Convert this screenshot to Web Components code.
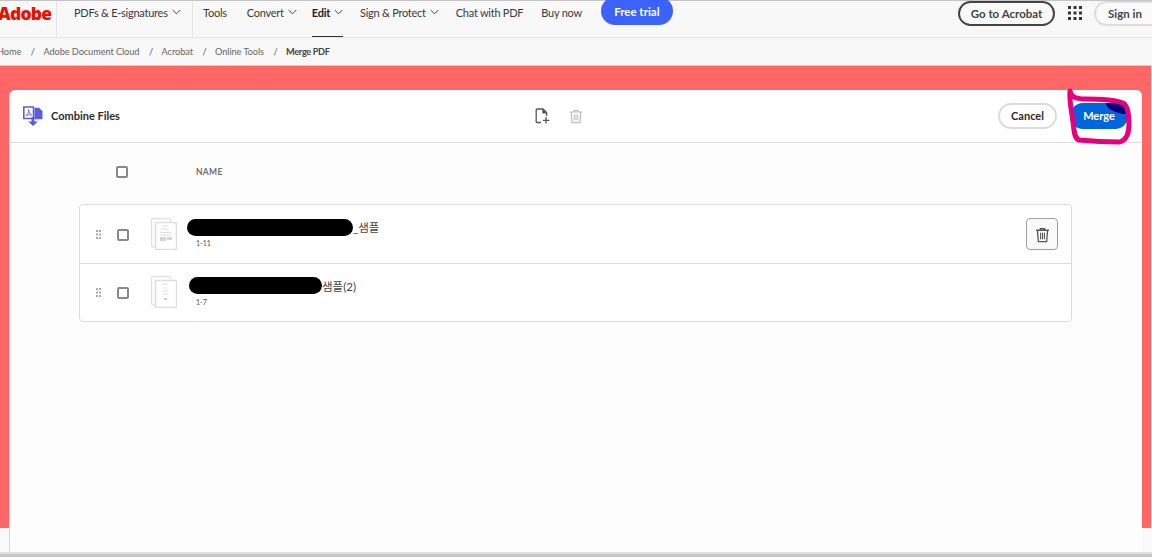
<!DOCTYPE html>
<html lang="en">
<head>
<meta charset="utf-8">
<title>Merge PDF</title>
<style>
  html, body { margin: 0; height: 100%; overflow: hidden; background: #fafafa; }
  body { font-family: Lato, "Noto Sans CJK KR", sans-serif; color: #2c2c2c; }
</style>
</head>
<body>
<app-shell>
  <top-nav></top-nav>
  <bread-crumbs></bread-crumbs>
  <combine-card>
    <file-row slot="files" pages="1-11" pill="166" offset="0" suffix="_샘플" kind="a"></file-row>
    <file-row slot="files" pages="1-7" pill="133" offset="2" suffix="샘플(2)" kind="b" last></file-row>
  </combine-card>
</app-shell>

<script>
const chevron = `<svg class="chev" width="9" height="6" viewBox="0 0 9 6"><path d="M.7 1l3.8 3.8L8.3 1" fill="none" stroke="#444" stroke-width="1"/></svg>`;

const trashPath = `
  <path d="M2 4h12M6 4V2.4h4V4" fill="none" stroke="currentColor" stroke-width="1.2"/>
  <path d="M3.2 4l.9 10.6h7.8L12.8 4" fill="none" stroke="currentColor" stroke-width="1.2"/>
  <path d="M6.2 6.4v6M8 6.4v6M9.8 6.4v6" fill="none" stroke="currentColor" stroke-width="1"/>`;

class AppShell extends HTMLElement {
  constructor() {
    super();
    this.attachShadow({ mode: "open" });
  }
  connectedCallback() {
    this.shadowRoot.innerHTML = `
    <style>
      :host { display: flex; flex-direction: column; height: 557px; overflow: hidden; }
      .edge { height: 2px; background: #dfdfdf; flex: none; }
      .floor { height: 3px; background: #c8c8c8; flex: none; }
    </style>
    <slot></slot>
    <div class="edge"></div>
    <div class="floor"></div>`;
  }
}

class TopNav extends HTMLElement {
  constructor() {
    super();
    this.attachShadow({ mode: "open" });
  }
  connectedCallback() {
    const dots = [];
    for (let y = 0; y < 3; y++) {
      for (let x = 0; x < 3; x++) {
        dots.push(`<rect x="${x * 5.5}" y="${y * 5.5}" width="3" height="3" fill="#333"/>`);
      }
    }
    this.shadowRoot.innerHTML = `
    <style>
      :host {
        display: flex; align-items: flex-start; flex: none; height: 36px;
        border-top: 1px solid #c4c4c4; border-bottom: 1px solid #e6e6e6;
        background: #f8f8f8; font-size: 11px; letter-spacing: -.25px; color: #3a3a3a; white-space: nowrap;
      }
      .logo { width: 59px; height: 36px; box-sizing: border-box; margin-left: -2px; border-right: 1px solid #e6e6e6;
        color: #eb1000; font: 800 17.5px/24px "Open Sans", sans-serif; letter-spacing: -.75px; }
      .group { display: flex; align-items: center; height: 22px; }
      .pdfs { width: 136px; height: 36px; box-sizing: border-box; padding: 0 0 14px 17px; border-right: 1px solid #e6e6e6; }
      .links { padding-left: 10px; gap: 0; }
      a { display: flex; align-items: center; height: 22px; color: inherit; text-decoration: none; }
      .chev { margin-left: 4px; flex: none; }
      .edit { position: relative; font-weight: 700; color: #222; }
      .edit::after { content: ""; position: absolute; left: 0; right: 0; top: 35px; height: 1px; background: #333; }
      .cta { flex: none; height: 28px; margin-top: -4px; margin-left: 19px; width: 72px; border-radius: 14px; letter-spacing: 0;
        background: #3b63fb; color: #fff; font-weight: 700; font-size: 11.5px; display: flex; align-items: center; justify-content: center; padding-top: 1px; box-sizing: border-box; }
      .right { margin-left: auto; display: flex; align-items: flex-start; }
      .pill { box-sizing: border-box; height: 25px; padding-bottom: 1px; border-radius: 13px; display: flex; align-items: center; justify-content: center; font-size: 11.5px; letter-spacing: 0; font-weight: 700; color: #444; background: #fafafa; }
      .acro { width: 97px; border: 2px solid #444; }
      .grid { margin: 5px 12px 0 13px; display: block; }
      .sign { width: 70px; margin-right: -12px; border: 2px solid #ddd; justify-content: flex-start; padding-left: 12px; }
    </style>
    <div class="logo">Adobe</div>
    <div class="group pdfs"><a>PDFs &amp; E-signatures${chevron}</a></div>
    <div class="group links">
      <a style="margin-right:20px">Tools</a>
      <a style="margin-right:15px">Convert${chevron}</a>
      <a class="edit" style="margin-right:17px">Edit${chevron}</a>
      <a style="margin-right:17px">Sign &amp; Protect${chevron}</a>
      <a style="margin-right:18px">Chat with PDF</a>
      <a>Buy now</a>
    </div>
    <div class="cta">Free trial</div>
    <div class="right">
      <div class="pill acro">Go to Acrobat</div>
      <svg class="grid" width="14" height="14" viewBox="0 0 14 14">${dots.join("")}</svg>
      <div class="pill sign">Sign in</div>
    </div>`;
  }
}

class BreadCrumbs extends HTMLElement {
  constructor() {
    super();
    this.attachShadow({ mode: "open" });
  }
  connectedCallback() {
    this.shadowRoot.innerHTML = `
    <style>
      :host {
        display: flex; align-items: center; flex: none; height: 27px; box-sizing: content-box;
        border-bottom: 1px solid #cfcfcf; background: #f8f8f8;
        font-size: 9.2px; letter-spacing: -.07px; color: #666; margin-left: -3px; white-space: nowrap; gap: 9.6px;
      }
      b { font-weight: 700; color: #444; letter-spacing: -.35px; }
      i { font-style: normal; color: #555; width: 3px; }
    </style>
    <span>Home</span><i>/</i><span>Adobe Document Cloud</span><i>/</i><span>Acrobat</span><i>/</i><span>Online Tools</span><i>/</i><b>Merge PDF</b>`;
  }
}

class CombineCard extends HTMLElement {
  constructor() {
    super();
    this.attachShadow({ mode: "open" });
  }
  connectedCallback() {
    this.shadowRoot.innerHTML = `
    <style>
      :host {
        display: block; flex: 1; min-height: 0; padding: 24px 9px 0 10px; margin-right: 1px;
        background: linear-gradient(#ff6666 462px, #fafafa 462px);
      }
      .card { position: relative; height: 100%; box-sizing: border-box; background: #fdfdfd; border-radius: 6px 6px 0 0; box-shadow: -1px 0 0 #d8d8d8; }
      header { display: flex; align-items: center; height: 52px; border-bottom: 1px solid #dcdcdc; box-sizing: content-box; background: #fff; border-radius: 6px 6px 0 0; }
      .brand { display: flex; align-items: center; gap: 8px; margin-left: 13px; width: 512px; font-size: 11px; font-weight: 700; color: #2c2c2c; }
      .brand span { margin-bottom: 1px; }
      .tools { display: flex; align-items: center; gap: 18px; }
      .actions { margin-left: auto; display: flex; align-items: center; gap: 13px; margin-right: 14px; }
      .btn { box-sizing: border-box; height: 26px; padding-bottom: 1px; border-radius: 13px; display: flex; align-items: center; justify-content: center; font-size: 11px; font-weight: 700; }
      .cancel { width: 59px; border: 2px solid #dcdcdc; color: #2c2c2c; background: #fff; }
      .merge { width: 58px; color: #fff; background: #0265dc; position: relative; overflow: hidden; }
      .merge span { position: relative; }
      .merge::before { content: ""; position: absolute; right: 0; top: 0; width: 22px; height: 11px; background: #00007f; border-radius: 0 11px 0 100%; }
      .scribble { position: absolute; right: 7px; top: -2px; pointer-events: none; }
      .head { display: flex; align-items: center; height: 57px; padding-bottom: 4px; }
      .head .box { margin-left: 106px; }
      .head span { margin-left: 68px; font-size: 8.5px; font-weight: 700; letter-spacing: .3px; color: #6e6e6e; margin-top: 1px; }
      .box { width: 12px; height: 12px; box-sizing: border-box; border: 2px solid #888; border-radius: 2px; background: #fff; }
      .list { margin: 0 69px 0 69px; width: 993px; box-sizing: border-box; border: 1px solid #dcdcdc; border-radius: 4px; background: #fff; }
    </style>
    <div class="card">
      <header>
        <div class="brand">
          <svg width="20" height="20" viewBox="0 0 20 20">
            <path d="M.8 1h9.700v11.500H.8z" fill="#fff" stroke="#5c5ce0" stroke-width="1.600"/>
            <path d="M3 9.500c2-1 3-3.500 2.600-6 .2 2.500 1.500 4.500 3 5.500-2-.4-4 0-5.600.5z" fill="none" stroke="#5c5ce0" stroke-width=".9"/>
            <path d="M11.500 1.800h4.500l3.500 3.400v8h-8z" fill="#5c5ce0"/>
            <path d="M8.500 11h3v4.500h3.300L10 20l-4.800-4.500h3.300z" fill="#5c5ce0"/>
          </svg>
          <span>Combine Files</span>
        </div>
        <div class="tools">
          <svg width="15" height="16" viewBox="0 0 15 16">
            <path d="M6 14.500H2.200a1 1 0 0 1-1-1V2a1 1 0 0 1 1-1h5.800l3.600 3.600V8" fill="none" stroke="#555" stroke-width="1.300"/>
            <path d="M7.800 1v4h3.800" fill="#555" stroke="#555"/>
            <path d="M11 9v6.500M7.800 12.300h6.600" fill="none" stroke="#555" stroke-width="1.300"/>
          </svg>
          <svg width="16" height="16" viewBox="0 0 16 16" style="color:#bcbcbc">${trashPath}</svg>
        </div>
        <div class="actions">
          <div class="btn cancel">Cancel</div>
          <div class="btn merge"><span>Merge</span></div>
        </div>
      </header>
      <svg class="scribble" width="70" height="58" viewBox="0 0 70 58">
        <path d="M5 3C6 8 9 11 20 11C34 11 50 12 58 15C63 18 64 28 64 36C64 46 61 52 55 54C42 54 24 53 14 52C9 50 9 42 8 34C7 24 4 14 5 3Z" fill="none" stroke="#e6007e" stroke-width="5" stroke-linejoin="round"/>
      </svg>
      <div class="head"><div class="box"></div><span>NAME</span></div>
      <div class="list"><slot name="files"></slot></div>
    </div>`;
  }
}

class FileRow extends HTMLElement {
  constructor() {
    super();
    this.attachShadow({ mode: "open" });
  }
  connectedCallback() {
    const pill = this.getAttribute("pill");
    const offset = this.getAttribute("offset");
    const first = this.getAttribute("kind") === "a";
    const lines = first
      ? `<path d="M12 9h6M11 12h8M10 15.500h11M10 18h11" stroke="#ddd" fill="none"/><path d="M10 20h6v4h-6zM17 20h5v3h-5z" fill="#d4d4d4"/>`
      : `<path d="M12 9h6M14 13h3M13 16h5M13 19h5" stroke="#ddd" fill="none"/><path d="M14 23h3v2h-3z" fill="#ccc"/>`;
    this.shadowRoot.innerHTML = `
    <style>
      :host { display: flex; align-items: center; height: 58px; box-sizing: content-box; border-bottom: 1px solid #dcdcdc; }
      :host([last]) { border-bottom: 0; height: 57px; }
      .grip { margin-left: 16px; width: 5px; flex: none; }
      .box { margin-left: 16px; width: 12px; height: 12px; box-sizing: border-box; flex: none; border: 2px solid #888; border-radius: 2px; background: #fff; margin-top: 1px; }
      .thumb { margin-left: 21px; margin-bottom: 2px; flex: none; display: block; }
      .meta { margin-left: calc(10px + var(--off)); flex: 1; }
      .name { display: flex; align-items: center; height: 18px; font-size: 11.5px; color: #444; margin-top: -2px; }
      .pill { height: 17px; border-radius: 9px; background: #000; flex: none; }
      .pages { font-size: 7px; color: #555; margin-left: calc(9px - var(--off)); margin-top: 3px; line-height: 9px; }
      .del { width: 32px; height: 32px; box-sizing: border-box; margin-right: 13px; flex: none; border: 1px solid #a0a0a0; border-radius: 4px; background: #fafafa; display: flex; align-items: center; justify-content: center; color: #555; }
    </style>
    <svg class="grip" width="5" height="9" viewBox="0 0 5 9" fill="#aaa">
      <path d="M0 0h2v2H0zM3 0h2v2H3zM0 3.500h2v2H0zM3 3.500h2v2H3zM0 7h2v2H0zM3 7h2v2H3z"/>
    </svg>
    <div class="box"></div>
    <svg class="thumb" width="27" height="33" viewBox="0 0 27 33">
      <rect x="1.500" y="1.500" width="19" height="28.500" rx="1.500" fill="#fdfdfd" stroke="#e2e2e2" stroke-width="1.300"/>
      <rect x="5.500" y="5.500" width="21" height="27" rx="1.500" fill="#fff" stroke="#dedede" stroke-width="1.500"/>
      ${lines}
    </svg>
    <div class="meta" style="--off:${offset}px">
      <div class="name"><span class="pill" style="width:${pill}px"></span><span>${this.getAttribute("suffix")}</span></div>
      <div class="pages">${this.getAttribute("pages")}</div>
    </div>
    ${first ? `<div class="del"><svg width="17" height="17" viewBox="0 0 16 16">${trashPath}</svg></div>` : ""}`;
  }
}

customElements.define("app-shell", AppShell);
customElements.define("top-nav", TopNav);
customElements.define("bread-crumbs", BreadCrumbs);
customElements.define("combine-card", CombineCard);
customElements.define("file-row", FileRow);
</script>
</body>
</html>
